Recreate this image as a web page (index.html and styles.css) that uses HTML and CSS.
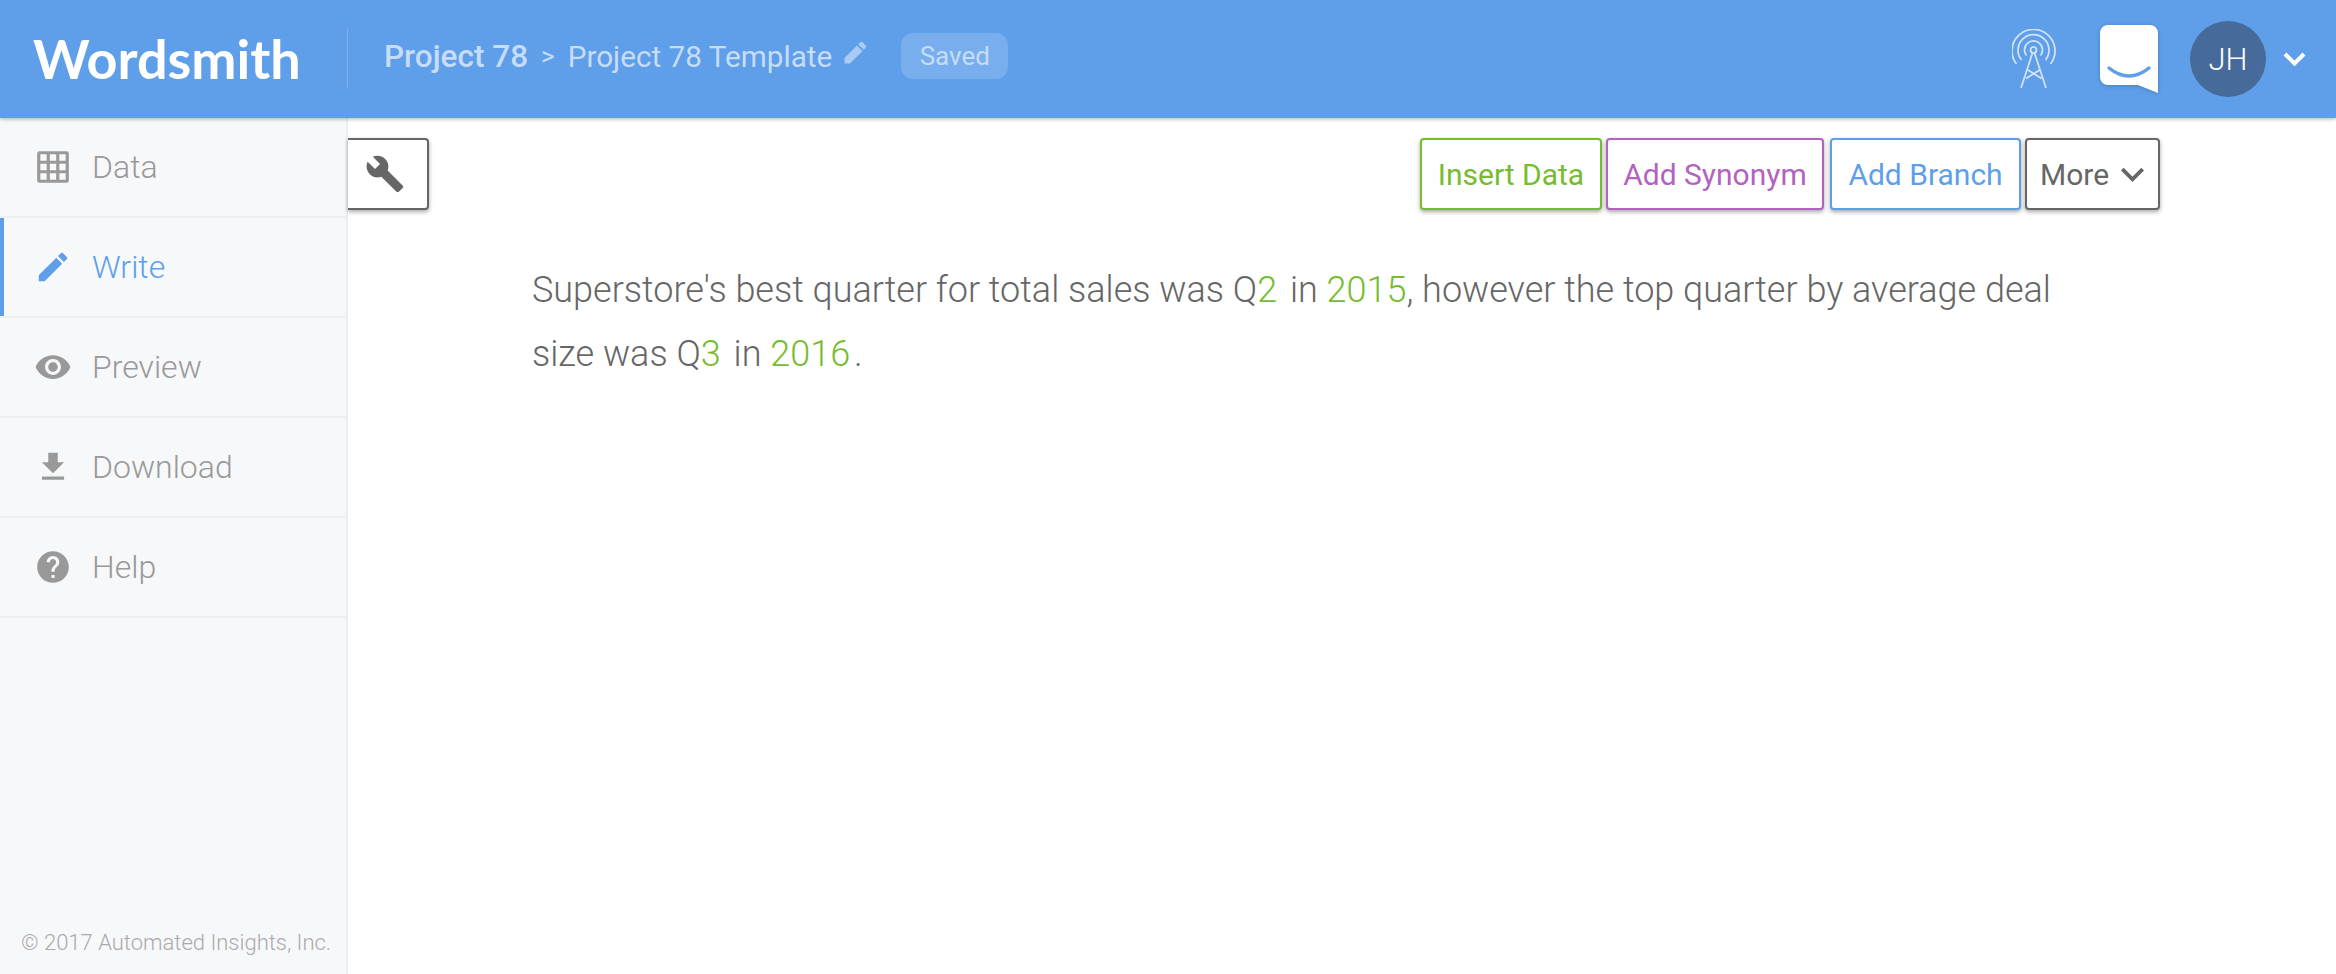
FILE: index.html
```html
<!DOCTYPE html>
<html lang="en">
<head>
  <meta charset="UTF-8">
  <title>Wordsmith</title>
  <link rel="stylesheet" href="styles.css">
</head>
<body>
  <header class="topbar">
    <div class="logo">Wordsmith</div>
    <div class="crumbs">
      <span class="crumb-project">Project 78</span>
      <span class="crumb-sep">&gt;</span>
      <span class="crumb-template">Project 78 Template</span>
      <svg class="crumb-pencil" viewBox="0 0 25 25"><path d="M18 1.500a2 2 0 0 1 2.800 0l2.700 2.700a2 2 0 0 1 0 2.800l-1.800 1.800-5.500-5.500zM15 4.500l5.500 5.500L8 22.500H2.500V17z"/></svg>
      <span class="saved">Saved</span>
    </div>
    <div class="top-actions">
      <svg class="tower" viewBox="0 0 44 60">
        <circle cx="21.500" cy="21" r="3"/>
        <path d="M4.500 35A21.500 21.500 0 1 1 38.500 35M9.500 31A15.500 15.500 0 1 1 33.500 31M14.500 26.500A9 9 0 1 1 28.500 26.500"/>
        <path d="M20.500 24L9 59M22.500 24L34 59M16 41L29.500 49.500M27.500 41L14 49.500"/>
      </svg>
      <svg class="chat" viewBox="0 0 58 68">
        <path class="chat-body" d="M8 0H50a8 8 0 0 1 8 8V68L38 60H8a8 8 0 0 1-8-8V8a8 8 0 0 1 8-8z"/>
        <path class="chat-smile" d="M9 43q20 16 40 0"/>
      </svg>
      <div class="avatar">JH</div>
      <svg class="caret" viewBox="0 0 23 14"><path d="M2 2l9.500 9.500L21 2"/></svg>
    </div>
  </header>

  <div class="shell">
    <aside class="sidebar">
      <nav>
        <a class="nav-item">
          <svg class="nav-icon" viewBox="0 0 24 24"><path fill-rule="evenodd" d="M3.500 2h17A1.500 1.500 0 0 1 22 3.500v17a1.500 1.500 0 0 1-1.500 1.500h-17A1.500 1.500 0 0 1 2 20.500v-17A1.500 1.500 0 0 1 3.500 2zM4 4v4h4V4zm6 0v4h4V4zm6 0v4h4V4zM4 10v4h4v-4zm6 0v4h4v-4zm6 0v4h4v-4zM4 16v4h4v-4zm6 0v4h4v-4zm6 0v4h4v-4z"/></svg>
          Data
        </a>
        <a class="nav-item active">
          <svg class="nav-icon" viewBox="0 0 24 24"><path d="M3 17.250V21h3.750L17.810 9.940l-3.750-3.750L3 17.250zM20.710 7.040c.39-.39.39-1.020 0-1.410l-2.340-2.340c-.39-.39-1.020-.39-1.410 0l-1.830 1.830 3.750 3.750 1.830-1.830z"/></svg>
          Write
        </a>
        <a class="nav-item">
          <svg class="nav-icon" viewBox="0 0 24 24"><path d="M12 4.500C7 4.500 2.730 7.610 1 12c1.730 4.390 6 7.500 11 7.500s9.270-3.110 11-7.500c-1.730-4.390-6-7.500-11-7.500zM12 17c-2.760 0-5-2.240-5-5s2.240-5 5-5 5 2.240 5 5-2.240 5-5 5zm0-8c-1.660 0-3 1.340-3 3s1.340 3 3 3 3-1.340 3-3-1.340-3-3-3z"/></svg>
          Preview
        </a>
        <a class="nav-item">
          <svg class="nav-icon" viewBox="0 0 24 24"><path d="M19 9h-4V3H9v6H5l7 7 7-7zM5 18v2h14v-2H5z"/></svg>
          Download
        </a>
        <a class="nav-item">
          <svg class="nav-icon" viewBox="0 0 24 24"><path d="M12 2C6.480 2 2 6.480 2 12s4.480 10 10 10 10-4.480 10-10S17.520 2 12 2zm1 17h-2v-2h2v2zm2.070-7.750l-.9.920C13.450 12.900 13 13.500 13 15h-2v-.5c0-1.100.45-2.100 1.170-2.830l1.240-1.260c.37-.36.59-.86.59-1.410 0-1.100-.9-2-2-2s-2 .9-2 2H8c0-2.210 1.790-4 4-4s4 1.790 4 4c0 .88-.36 1.680-.93 2.250z"/></svg>
          Help
        </a>
      </nav>
      <footer class="copyright">© 2017 Automated Insights, Inc.</footer>
    </aside>

    <main class="editor">
      <div class="toolbar">
        <button class="btn btn-tool">
          <svg viewBox="0 0 24 24"><path d="M22.700 19l-9.100-9.100c.9-2.300.4-5-1.500-6.900-2-2-5-2.400-7.400-1.300L9 6 6 9 1.600 4.700C.4 7.100.9 10.100 2.900 12.100c1.900 1.900 4.600 2.400 6.900 1.500l9.100 9.100c.4.4 1 .4 1.400 0l2.300-2.300c.5-.4.5-1.100.1-1.400z"/></svg>
        </button>
        <div class="btn-group">
          <button class="btn btn-green">Insert Data</button>
          <button class="btn btn-purple">Add Synonym</button>
          <button class="btn btn-blue">Add Branch</button>
          <button class="btn btn-more">More
            <svg viewBox="0 0 23 14"><path d="M2 2l9.500 9.500L21 2"/></svg>
          </button>
        </div>
      </div>
      <p class="narrative">Superstore's best quarter for total sales was Q<span class="var var-gap">2</span> in <span class="var">2015</span>, however the top quarter by average deal size was Q<span class="var var-gap">3</span> in <span class="var">2016</span><span class="period">.</span></p>
    </main>
  </div>
</body>
</html>
```

FILE: styles.css
```css
* {
  box-sizing: border-box;
}

html, body {
  height: 100%;
}

body {
  margin: 0;
  display: flex;
  flex-direction: column;
  overflow: hidden;
  font-family: Roboto, "Liberation Sans", sans-serif;
  font-weight: 300;
  color: #666;
  background: #fff;
}

/* top bar */
.topbar {
  position: relative;
  z-index: 2;
  display: flex;
  align-items: center;
  flex: 0 0 118px;
  background: #5f9fe9;
  box-shadow: 0 1px 4px rgba(0, 0, 0, 0.3);
}

.logo {
  display: flex;
  align-items: center;
  width: 348px;
  height: 60px;
  margin-top: -2px;
  padding-left: 33px;
  border-right: 1px solid rgba(255, 255, 255, 0.2);
  font-family: Lato, sans-serif;
  font-size: 54px;
  font-weight: 700;
  color: #fff;
}

.crumbs {
  display: flex;
  align-items: center;
  margin-top: -6px;
  padding-left: 36px;
  font-size: 29.700px;
  font-weight: 400;
  color: #c6dcf7;
}

.crumb-project {
  font-size: 31.500px;
  font-weight: 500;
}

.crumb-sep {
  margin: 0 13px;
  font-size: 26px;
}

.crumb-pencil {
  width: 25px;
  height: 25px;
  margin: -6px 0 0 10px;
  fill: #a9caf2;
}

.saved {
  margin-left: 34px;
  width: 107px;
  height: 46px;
  line-height: 46px;
  text-align: center;
  border-radius: 12px;
  background: #79aeee;
  font-size: 26px;
}

.top-actions {
  display: flex;
  align-items: center;
  margin-left: auto;
  padding-right: 30px;
}

.tower {
  width: 44px;
  height: 60px;
  fill: none;
  stroke: #d5e5f9;
  stroke-width: 1.700;
}

.chat {
  width: 58px;
  height: 68px;
  margin: 0 32px 0 44px;
  filter: drop-shadow(0 1px 2px rgba(0, 0, 0, 0.2));
}

.chat-body {
  fill: #fff;
}

.chat-smile {
  fill: none;
  stroke: #5f9fe9;
  stroke-width: 3.500;
  stroke-linecap: round;
}

.avatar {
  display: flex;
  align-items: center;
  justify-content: center;
  width: 76px;
  height: 76px;
  border-radius: 50%;
  background: #466a99;
  color: #fff;
  font-size: 31px;
}

.caret {
  width: 23px;
  height: 14px;
  margin-left: 17px;
  fill: none;
  stroke: #fff;
  stroke-width: 4;
}

/* body of the page */
.shell {
  display: flex;
  flex: 1;
  min-height: 0;
}

.sidebar {
  display: flex;
  flex-direction: column;
  flex: 0 0 348px;
  background: #f7f8fa;
  border-right: 2px solid #eceef0;
}

.nav-item {
  display: flex;
  align-items: center;
  gap: 20px;
  height: 100px;
  padding-left: 34px;
  border-bottom: 2px solid #eef0f2;
  font-size: 32px;
  color: #999;
}

.nav-icon {
  width: 38px;
  height: 38px;
  fill: #999;
}

.nav-item.active {
  color: #5f9fe9;
  box-shadow: inset 4px 0 0 #5f9fe9;
}

.nav-item.active .nav-icon {
  fill: #5f9fe9;
}

.copyright {
  margin-top: auto;
  padding: 0 0 19px 21px;
  font-size: 22px;
  color: #aaa;
  white-space: nowrap;
}

/* editor */
.editor {
  flex: 1;
  min-width: 0;
}

.toolbar {
  display: flex;
  justify-content: space-between;
  padding: 20px 176px 0 0;
}

.btn-group {
  display: flex;
  gap: 4px;
}

.btn {
  display: flex;
  align-items: center;
  justify-content: center;
  height: 72px;
  padding: 0;
  border: 2px solid;
  border-radius: 4px;
  background: #fff;
  box-shadow: 0 2px 4px rgba(0, 0, 0, 0.35);
  font-family: Roboto, sans-serif;
  font-size: 30px;
  font-weight: 400;
}

.btn-tool {
  width: 81px;
  padding-right: 6px;
  border-color: #666;
  border-left: 0;
  border-radius: 0 4px 4px 0;
}

.btn-tool svg {
  width: 40px;
  height: 40px;
  fill: #666;
}

.btn-green {
  width: 182px;
  color: #76bc2e;
  border-color: #76bc2e;
}

.btn-purple {
  width: 218px;
  margin-right: 2px;
  color: #b262c0;
  border-color: #b262c0;
}

.btn-blue {
  width: 191px;
  color: #5f9fe9;
  border-color: #5f9fe9;
}

.btn-more {
  width: 135px;
  color: #666;
  border-color: #666;
}

.btn-more svg {
  width: 25px;
  height: 15px;
  margin-left: 11px;
  fill: none;
  stroke: #666;
  stroke-width: 3.500;
}

.narrative {
  width: 1550px;
  margin: 48px 0 0 184px;
  font-size: 36px;
  line-height: 64px;
}

.var {
  color: #76bc2e;
}

.var-gap {
  margin-right: 4px;
}

.period {
  margin-left: 4px;
}
```
